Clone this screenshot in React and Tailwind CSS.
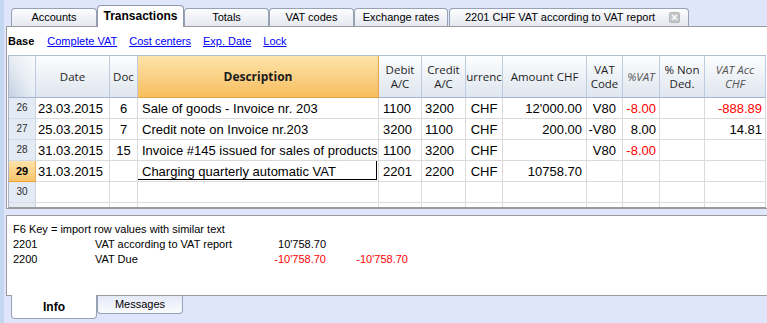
const W = ['w-[27px]', 'w-[74px]', 'w-[28px]', 'w-[241px]', 'w-[43px]', 'w-[44px]', 'w-[37px]', 'w-[84px]', 'w-[36px]', 'w-[37px]', 'w-[45px]', 'w-[61px]'];

const rows = [
  { n: '26', date: '23.03.2015', doc: '6', desc: 'Sale of goods - Invoice nr. 203', debit: '1100', credit: '3200', cur: 'CHF', amount: "12'000.00", vat: 'V80', pvat: '-8.00', pvatRed: true, nonded: '', acc: '-888.89', accRed: true },
  { n: '27', date: '25.03.2015', doc: '7', desc: 'Credit note on Invoice nr.203', debit: '3200', credit: '1100', cur: 'CHF', amount: '200.00', vat: '-V80', pvat: '8.00', pvatRed: false, nonded: '', acc: '14.81', accRed: false },
  { n: '28', date: '31.03.2015', doc: '15', desc: 'Invoice #145 issued for sales of products', debit: '1100', credit: '3200', cur: 'CHF', amount: '', vat: 'V80', pvat: '-8.00', pvatRed: true, nonded: '', acc: '', accRed: false },
  { n: '29', date: '31.03.2015', doc: '', desc: 'Charging quarterly automatic VAT', debit: '2201', credit: '2200', cur: 'CHF', amount: '10758.70', vat: '', pvat: '', pvatRed: false, nonded: '', acc: '', accRed: false, current: true },
  { n: '30', date: '', doc: '', desc: '', debit: '', credit: '', cur: '', amount: '', vat: '', pvat: '', pvatRed: false, nonded: '', acc: '', accRed: false },
];

function Tab({ w, children }) {
  return (
    <div className={`${w} h-[18px] shrink-0 border border-b-0 border-[#97a1b4] rounded-t-[4px] bg-linear-to-b from-[#fdfdfe] to-[#e5e8f0] flex items-center justify-center text-[11px] leading-none`}>
      {children}
    </div>
  );
}

function Cell({ w, className = '', children }) {
  return (
    <div className={`${w} h-full shrink-0 border-r border-b border-[#dadada] flex items-center overflow-hidden whitespace-nowrap ${className}`}>
      {children}
    </div>
  );
}

function Hd({ w, className = '', children }) {
  return (
    <div className={`${w} h-full shrink-0 border-r border-b border-r-[#bccbdd] border-b-[#a2b5cc] bg-linear-to-b from-[#fcfdfe] to-[#dfe6ef] flex flex-col items-center justify-center text-center leading-[14px] overflow-hidden whitespace-nowrap ${className}`}>
      {children}
    </div>
  );
}

function Row({ r }) {
  const cur = r.current;
  return (
    <div className="flex h-[21px] text-[13px] leading-none">
      <div className={`${W[0]} h-full shrink-0 border-r border-b flex items-center justify-center ${cur ? 'bg-linear-to-b from-[#fee3aa] to-[#f9c46b] border-r-[#e9b060] border-b-[#ef9f35] font-bold text-[11px] text-black' : 'bg-[#e4ebf5] border-r-[#c9d5e3] border-b-[#d3dce8] text-[10px] text-[#2a2a2a]'}`}>
        {r.n}
      </div>
      <Cell w={W[1]} className="pl-[2px]">{r.date}</Cell>
      <Cell w={W[2]} className="justify-center">{r.doc}</Cell>
      <Cell w={W[3]} className="pl-[4px] relative">
        {r.desc}
        {cur && <div className="absolute -left-px -top-px right-px bottom-px border border-black" />}
      </Cell>
      <Cell w={W[4]} className="pl-[4px]">{r.debit}</Cell>
      <Cell w={W[5]} className="pl-[3px]">{r.credit}</Cell>
      <Cell w={W[6]} className="justify-center">{r.cur}</Cell>
      <Cell w={W[7]} className="justify-end pr-[4px]">{r.amount}</Cell>
      <Cell w={W[8]} className="justify-end pr-[6px]">{r.vat}</Cell>
      <Cell w={W[9]} className={`justify-end pr-[3px] ${r.pvatRed ? 'text-[#ff0000]' : ''}`}>{r.pvat}</Cell>
      <Cell w={W[10]}>{r.nonded}</Cell>
      <Cell w={W[11]} className={`justify-end pr-[3px] ${r.accRed ? 'text-[#ff0000]' : ''}`}>{r.acc}</Cell>
    </div>
  );
}

export default function App() {
  return (
    <div className="w-[767px] h-[323px] overflow-hidden bg-[#dfe6fc] flex font-['Liberation_Sans',Arial,sans-serif] text-black">
      <div className="w-[4px] h-full bg-[#c4d7f0] shrink-0" />
      <div className="w-[2px] shrink-0" />
      <div className="flex-1 flex flex-col min-w-0">
        {/* top tab bar */}
        <div className="h-[26px] flex items-end pl-[5px] shrink-0">
          <Tab w="w-[86px]">Accounts</Tab>
          <div className="w-[87px] h-[22px] -mb-px shrink-0 relative z-10 bg-white border border-b-0 border-[#8f99ab] rounded-t-[4px] flex items-center justify-center pb-[2px] text-[12px] font-bold leading-none">
            Transactions
          </div>
          <Tab w="w-[85px]">Totals</Tab>
          <Tab w="w-[85px]">VAT codes</Tab>
          <Tab w="w-[94px]">Exchange rates</Tab>
          <div className="w-[1px] shrink-0" />
          <div className="w-[240px] h-[18px] shrink-0 relative border border-b-0 border-[#97a1b4] rounded-t-[4px] bg-linear-to-b from-[#fdfdfe] to-[#e5e8f0] flex items-center pl-[15px] text-[11px] leading-none">
            2201 CHF VAT according to VAT report
            <div className="absolute right-[8px] top-[3px] w-[11px] h-[11px] rounded-[2px] bg-[#c6c8cc] border border-[#b4b6ba] flex items-center justify-center text-white text-[11px] font-bold leading-none">
              ×
            </div>
          </div>
        </div>

        {/* main panel */}
        <div className="h-[183px] shrink-0 border-t border-l border-b border-[#9b9b9b] bg-white flex flex-col">
          <div className="h-[28px] shrink-0 flex items-center pl-[1px] pt-[1px] text-[11px] leading-none">
            <span className="font-bold mr-[13px]">Base</span>
            <span className="text-[#0000ff] underline mr-[12px]">Complete VAT</span>
            <span className="text-[#0000ff] underline mr-[12px]">Cost centers</span>
            <span className="text-[#0000ff] underline mr-[12px]">Exp. Date</span>
            <span className="text-[#0000ff] underline">Lock</span>
          </div>
          <div className="ml-[1px] w-[758px] border-l border-t border-b border-l-[#a9b4c4] border-t-[#aebdd0] border-b-[#9a9a9a] flex flex-col">
            {/* header */}
            <div className="flex h-[42px] font-['Open_Sans',sans-serif] text-[11.5px] text-[#1e1e1e]">
              <div className={`${W[0]} h-full shrink-0 border-r border-b border-r-[#bccbdd] border-b-[#a2b5cc] bg-linear-to-tr from-[#c3d1e2] via-[#e6ecf3] to-[#fbfcfd]`} />
              <Hd w={W[1]}>Date</Hd>
              <Hd w={W[2]}>Doc</Hd>
              <div className={`${W[3]} h-full shrink-0 border-r border-b border-r-[#eaa94f] border-b-[#eaa243] bg-linear-to-b from-[#fde4aa] to-[#f7bd5c] flex items-center justify-center font-bold text-[12px] text-[#1a1a1a]`}>
                Description
              </div>
              <Hd w={W[4]}><span>Debit</span><span>A/C</span></Hd>
              <Hd w={W[5]}><span>Credit</span><span>A/C</span></Hd>
              <Hd w={W[6]}>urrenc</Hd>
              <Hd w={W[7]}>Amount CHF</Hd>
              <Hd w={W[8]}><span>VAT</span><span>Code</span></Hd>
              <Hd w={W[9]} className="italic text-[#555]">%VAT</Hd>
              <Hd w={W[10]}><span>% Non</span><span>Ded.</span></Hd>
              <Hd w={W[11]} className="italic text-[#555]"><span>VAT Acc</span><span>CHF</span></Hd>
            </div>
            {rows.map((r) => (
              <Row key={r.n} r={r} />
            ))}
            {/* partial row */}
            <div className="flex h-[4px]">
              <div className={`${W[0]} h-full shrink-0 border-r border-[#c9d5e3] bg-[#e4ebf5]`} />
              {W.slice(1).map((w, i) => (
                <div key={i} className={`${w} h-full shrink-0 border-r border-[#dadada]`} />
              ))}
            </div>
          </div>
        </div>

        {/* splitter */}
        <div className="h-[6px] shrink-0" />

        {/* info panel */}
        <div className="h-[81px] shrink-0 border-t border-l border-b border-[#9b9b9b] bg-white pl-[6px] pt-[6px] text-[11px] leading-[15px]">
          <div>F6 Key = import row values with similar text</div>
          <div className="flex">
            <span className="w-[82px]">2201</span>
            <span className="w-[160px]">VAT according to VAT report</span>
            <span className="w-[71px] text-right">10'758.70</span>
          </div>
          <div className="flex">
            <span className="w-[82px]">2200</span>
            <span className="w-[160px]">VAT Due</span>
            <span className="w-[71px] text-right text-[#ff0000]">-10'758.70</span>
            <span className="w-[82px] text-right text-[#ff0000]">-10'758.70</span>
          </div>
        </div>

        {/* bottom tabs */}
        <div className="flex items-start pl-[5px]">
          <div className="w-[86px] h-[24px] -mt-px shrink-0 relative z-10 bg-white border border-t-0 border-[#97a1b4] rounded-b-[4px] flex items-center justify-center font-bold text-[12px] leading-none">
            Info
          </div>
          <div className="w-[86px] h-[18px] shrink-0 border border-t-0 border-[#97a1b4] rounded-b-[4px] bg-linear-to-b from-[#e4e9f7] to-[#fafbfe] flex items-center justify-center text-[11px] leading-none">
            Messages
          </div>
        </div>
      </div>
    </div>
  );
}
